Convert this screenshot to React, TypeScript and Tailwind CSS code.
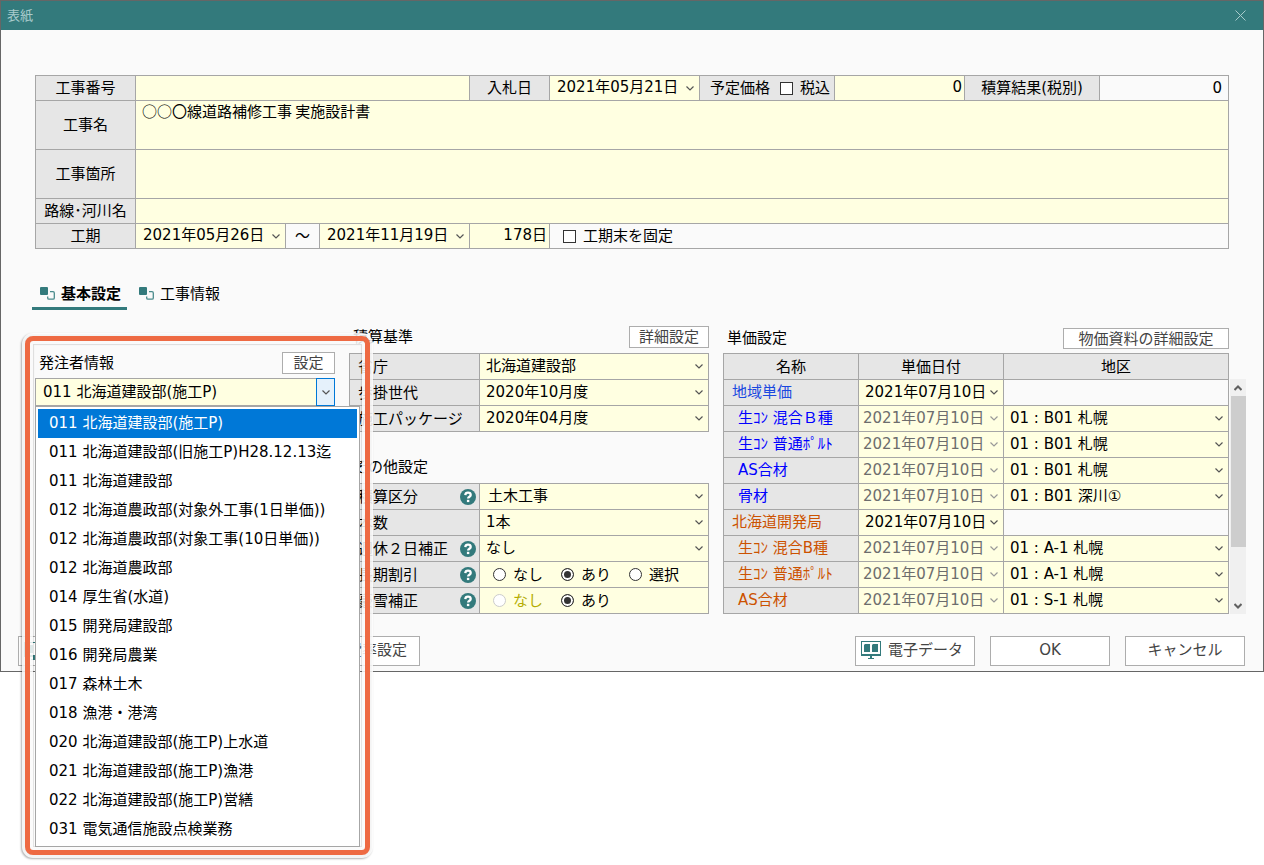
import { useState } from "react";
import type { ReactNode } from "react";

type Option = {
  code: string;
  name: string;
};

type PriceRow = {
  name: string;
  group: "region" | "bureau";
  parent?: boolean;
  area?: string;
};

const clients: Option[] = [
  { code: "011", name: "北海道建設部(施工P)" },
  { code: "011", name: "北海道建設部(旧施工P)H28.12.13迄" },
  { code: "011", name: "北海道建設部" },
  { code: "012", name: "北海道農政部(対象外工事(1日単価))" },
  { code: "012", name: "北海道農政部(対象工事(10日単価))" },
  { code: "012", name: "北海道農政部" },
  { code: "014", name: "厚生省(水道)" },
  { code: "015", name: "開発局建設部" },
  { code: "016", name: "開発局農業" },
  { code: "017", name: "森林土木" },
  { code: "018", name: "漁港・港湾" },
  { code: "020", name: "北海道建設部(施工P)上水道" },
  { code: "021", name: "北海道建設部(施工P)漁港" },
  { code: "022", name: "北海道建設部(施工P)営繕" },
  { code: "031", name: "電気通信施設点検業務" },
];

const prices: PriceRow[] = [
  { name: "地域単価", group: "region", parent: true },
  { name: "生ｺﾝ 混合Ｂ種", group: "region", area: "01 : B01 札幌" },
  { name: "生ｺﾝ 普通ﾎﾟﾙﾄ", group: "region", area: "01 : B01 札幌" },
  { name: "AS合材", group: "region", area: "01 : B01 札幌" },
  { name: "骨材", group: "region", area: "01 : B01 深川①" },
  { name: "北海道開発局", group: "bureau", parent: true },
  { name: "生ｺﾝ 混合B種", group: "bureau", area: "01 : A-1 札幌" },
  { name: "生ｺﾝ 普通ﾎﾟﾙﾄ", group: "bureau", area: "01 : A-1 札幌" },
  { name: "AS合材", group: "bureau", area: "01 : S-1 札幌" },
];

function Chevron({ className = "" }: { className?: string }) {
  return (
    <svg
      viewBox="0 0 8 5"
      className={`pointer-events-none h-[5px] w-2 fill-none stroke-current ${className}`}
      aria-hidden="true"
    >
      <path d="M0.5 0.5 L4 4 L7.5 0.5" strokeWidth="1.2" />
    </svg>
  );
}

function Select({
  label,
  value,
  pad = "pl-1.5",
  disabled = false,
}: {
  label: string;
  value: string;
  pad?: string;
  disabled?: boolean;
}) {
  return (
    <div className="relative flex h-full w-full items-center bg-[#ffffe1]">
      <select
        aria-label={label}
        disabled={disabled}
        className={`h-full w-full appearance-none bg-transparent pb-0.5 text-black outline-none disabled:text-[#6d6d6d] disabled:opacity-100 ${pad}`}
      >
        <option>{value}</option>
      </select>
      <Chevron
        className={`absolute right-[5px] ${disabled ? "text-[#999]" : "text-[#555]"}`}
      />
    </div>
  );
}

function Button({
  children,
  label,
  className = "",
}: {
  children: ReactNode;
  label?: string;
  className?: string;
}) {
  return (
    <button
      type="button"
      aria-label={label}
      className={`flex items-center border border-[#adadad] bg-white text-[#444] ${className}`}
    >
      {children}
    </button>
  );
}

function CheckBox({ id, children }: { id: string; children: ReactNode }) {
  return (
    <label htmlFor={id} className="flex items-center gap-[7px]">
      <input
        id={id}
        type="checkbox"
        className="size-[13px] appearance-none border border-[#333] bg-white checked:bg-[#333]"
      />
      {children}
    </label>
  );
}

function RadioGroup({
  name,
  items,
  initial,
  disabledItem,
}: {
  name: string;
  items: string[];
  initial: string;
  disabledItem?: string;
}) {
  const [value, setValue] = useState(initial);

  return (
    <div
      role="radiogroup"
      aria-label={name}
      className="flex h-full flex-1 items-center gap-[18px] bg-[#ffffe1] pl-[13px]"
    >
      {items.map((item) => {
        const off = item === disabledItem;
        return (
          <label
            key={item}
            className={`flex items-center gap-[7px] ${off ? "text-[#b5ad00]" : ""}`}
          >
            <input
              type="radio"
              name={name}
              checked={value === item}
              disabled={off}
              onChange={() => setValue(item)}
              className="size-[13px] appearance-none rounded-full border border-[#333] bg-white checked:bg-[#333] checked:shadow-[inset_0_0_0_2px_white] disabled:border-[#ccc]"
            />
            {item}
          </label>
        );
      })}
    </div>
  );
}

function HelpIcon() {
  return (
    <button type="button" aria-label="ヘルプ" className="size-4">
      <svg viewBox="0 0 16 16" className="size-4" aria-hidden="true">
        <circle cx="8" cy="8" r="8" fill="#337a7c" />
        <path
          d="M5.3 6.1 C5.4 4.5 6.4 3.7 8 3.7 C9.7 3.7 10.7 4.6 10.7 5.9 C10.7 7.7 8.1 7.7 8.1 9.6"
          fill="none"
          stroke="#fff"
          strokeWidth="2.3"
        />
        <rect x="6.9" y="10.8" width="2.4" height="2.3" fill="#fff" />
      </svg>
    </button>
  );
}

function MonitorIcon() {
  return (
    <svg viewBox="0 0 20 18" className="h-[18px] w-5 shrink-0" aria-hidden="true">
      <path
        fill="#337a7c"
        fillRule="evenodd"
        d="M0 0h20v15h-9v2h2v1H7v-1h2v-2H0zM1 1v12h18V1z"
      />
      <path fill="#337a7c" d="M3 4l1-1h5v8H3zM11 4l1-1h5v8h-6z" />
    </svg>
  );
}

function TabIcon() {
  return (
    <svg viewBox="0 0 15 13" className="h-[13px] w-[15px]" aria-hidden="true">
      <rect width="8" height="8" rx="1" fill="#337a7c" />
      <path
        d="M10 4.6h3a1.3 1.3 0 0 1 1.3 1.3v5a1.3 1.3 0 0 1-1.3 1.3H9a1.3 1.3 0 0 1-1.3-1.3v-1.4"
        fill="none"
        stroke="#4a8b8c"
        strokeWidth="1.3"
      />
    </svg>
  );
}

function FormLabel({ children, className }: { children: ReactNode; className: string }) {
  return (
    <div className={`flex shrink-0 items-center justify-center bg-[#e6e6e6] ${className}`}>
      {children}
    </div>
  );
}

function SettingRow({
  label,
  help = false,
  children,
}: {
  label: string;
  help?: boolean;
  children: ReactNode;
}) {
  return (
    <div className="flex h-[25px] gap-px">
      <div className="flex w-[129px] shrink-0 items-center justify-between bg-[#e6e6e6] pr-[3px] pl-2 whitespace-nowrap">
        {label}
        {help && <HelpIcon />}
      </div>
      {children}
    </div>
  );
}

function ProjectForm() {
  return (
    <div className="mx-[34px] flex flex-col gap-px border border-[#a6a6a6] bg-[#a6a6a6]">
      <div className="flex h-6 gap-px">
        <FormLabel className="w-[99px]">
          <label htmlFor="project-no">工事番号</label>
        </FormLabel>
        <input id="project-no" className="min-w-0 flex-1 bg-[#ffffe1] px-1.5 outline-none" />
        <FormLabel className="w-[79px]">入札日</FormLabel>
        <div className="w-[149px]">
          <Select label="入札日" value="2021年05月21日" pad="pl-[7px]" />
        </div>
        <FormLabel className="w-[134px] gap-2.5 pl-1.5">
          <label htmlFor="planned-price">予定価格</label>
          <CheckBox id="tax-included">税込</CheckBox>
        </FormLabel>
        <input
          id="planned-price"
          defaultValue="0"
          className="w-[129px] bg-[#ffffe1] pr-0.5 pb-0.5 text-right outline-none"
        />
        <FormLabel className="w-[134px]">積算結果(税別)</FormLabel>
        <output className="w-32 bg-[#fafafa] pr-1.5 text-right leading-6">0</output>
      </div>
      <div className="flex h-12 gap-px">
        <FormLabel className="w-[99px]">
          <label htmlFor="project-name">工事名</label>
        </FormLabel>
        <textarea
          id="project-name"
          defaultValue="○○〇線道路補修工事 実施設計書"
          className="flex-1 resize-none bg-[#ffffe1] pl-1.5 font-['Noto_Sans_CJK_JP',sans-serif] leading-5 outline-none"
        />
      </div>
      <div className="flex h-12 gap-px">
        <FormLabel className="w-[99px]">
          <label htmlFor="project-place">工事箇所</label>
        </FormLabel>
        <textarea id="project-place" className="flex-1 resize-none bg-[#ffffe1] pl-1.5 outline-none" />
      </div>
      <div className="flex h-6 gap-px">
        <FormLabel className="w-[99px]">
          <label htmlFor="route-name">路線･河川名</label>
        </FormLabel>
        <input id="route-name" className="flex-1 bg-[#ffffe1] px-1.5 outline-none" />
      </div>
      <div className="flex h-6 gap-px">
        <FormLabel className="w-[99px]">工期</FormLabel>
        <div className="w-[149px]">
          <Select label="工期開始日" value="2021年05月26日" pad="pl-[7px]" />
        </div>
        <div className="flex w-[33px] items-center justify-center bg-[#fafafa]">～</div>
        <div className="w-[149px]">
          <Select label="工期終了日" value="2021年11月19日" pad="pl-[7px]" />
        </div>
        <input
          aria-label="日数"
          defaultValue="178日"
          className="w-[79px] bg-[#ffffe1] pr-0.5 pb-0.5 text-right outline-none"
        />
        <div className="flex flex-1 items-center bg-[#fafafa] pl-[13px]">
          <CheckBox id="fix-end">工期末を固定</CheckBox>
        </div>
      </div>
    </div>
  );
}

function Tabs() {
  const [active, setActive] = useState("基本設定");

  return (
    <div role="tablist" className="mt-[31px] flex gap-1 px-[31px]">
      {["基本設定", "工事情報"].map((tab) => (
        <button
          key={tab}
          type="button"
          role="tab"
          aria-selected={active === tab}
          onClick={() => setActive(tab)}
          className={`flex h-[30px] items-center gap-1.5 border-b-[3px] px-2 pr-1.5 ${
            active === tab ? "border-[#337a7c] font-bold" : "border-transparent"
          }`}
        >
          <TabIcon />
          {tab}
        </button>
      ))}
    </div>
  );
}

function ClientPanel() {
  const [selected, setSelected] = useState(0);

  return (
    <section className="relative w-[300px] shrink-0 pt-[26px]">
      <div className="flex h-[22px] items-center justify-between pl-1">
        <h2>発注者情報</h2>
        <Button className="h-[22px] w-[53px] justify-center">設定</Button>
      </div>
      <div className="relative mt-1 flex h-7 border border-[#a6a6a6] bg-[#ffffe1]">
        <select
          aria-label="発注者情報"
          value={selected}
          onChange={(e) => setSelected(Number(e.target.value))}
          className="w-full appearance-none bg-transparent pl-[7px] outline-none"
        >
          {clients.map((client, i) => (
            <option key={client.name} value={i}>
              {client.code} {client.name}
            </option>
          ))}
        </select>
        <div className="pointer-events-none absolute -inset-y-px -right-px flex w-[19px] items-center justify-center border border-[#0078d7] bg-[#e5f1fb] text-[#555]">
          <Chevron />
        </div>
      </div>

      <ul
        role="listbox"
        aria-label="発注者一覧"
        className="absolute top-full left-0 z-20 w-[325px] border border-[#a6a6a6] bg-white p-0.5"
      >
        {clients.map((client, i) => (
          <li
            key={client.name}
            role="option"
            aria-selected={i === selected}
            onClick={() => setSelected(i)}
            className={`h-[29px] pl-[11px] leading-[28px] whitespace-nowrap ${
              i === selected ? "bg-[#0078d7] text-white" : ""
            }`}
          >
            {client.code} {client.name}
          </li>
        ))}
      </ul>

      {/* highlight frame around the client picker */}
      <div className="pointer-events-none absolute top-2.5 -left-2.5 z-10 h-[519px] w-[345px] rounded-lg border-5 border-[#ee6a43] shadow-[0_0_0_3px_rgba(255,255,255,0.85),-1px_1px_2px_3px_rgba(0,0,0,0.3),inset_0_0_0_3px_rgba(255,255,255,0.85),inset_0_0_1px_4px_rgba(0,0,0,0.12)]" />
    </section>
  );
}

function StandardsPanel() {
  return (
    <section className="w-[360px] shrink-0">
      <div className="flex h-[27px] items-end justify-between pb-[5px] pl-1">
        <h2 className="leading-[22px]">積算基準</h2>
        <Button className="h-[22px] w-20 justify-center">詳細設定</Button>
      </div>
      <div className="flex flex-col gap-px border border-[#a6a6a6] bg-[#a6a6a6]">
        <SettingRow label="省庁">
          <Select label="省庁" value="北海道建設部" />
        </SettingRow>
        <SettingRow label="歩掛世代">
          <Select label="歩掛世代" value="2020年10月度" />
        </SettingRow>
        <SettingRow label="施工パッケージ">
          <Select label="施工パッケージ" value="2020年04月度" />
        </SettingRow>
      </div>

      <h2 className="mt-6 mb-1 pl-1 leading-[23px]">その他設定</h2>
      <div className="flex flex-col gap-px border border-[#a6a6a6] bg-[#a6a6a6]">
        <SettingRow label="積算区分" help>
          <Select label="積算区分" value="土木工事" pad="pl-2" />
        </SettingRow>
        <SettingRow label="本数">
          <Select label="本数" value="1本" />
        </SettingRow>
        <SettingRow label="週休２日補正" help>
          <Select label="週休２日補正" value="なし" />
        </SettingRow>
        <SettingRow label="長期割引" help>
          <RadioGroup name="長期割引" items={["なし", "あり", "選択"]} initial="あり" />
        </SettingRow>
        <SettingRow label="豪雪補正" help>
          <RadioGroup
            name="豪雪補正"
            items={["なし", "あり"]}
            initial="あり"
            disabledItem="なし"
          />
        </SettingRow>
      </div>
    </section>
  );
}

function ScrollBar() {
  return (
    <div className="mt-[26px] flex w-4 shrink-0 flex-col items-center bg-[#f0f0f0] text-[#606060]">
      <button type="button" aria-label="上へ" className="flex h-[17px] w-4 items-center justify-center">
        <svg viewBox="0 0 8 6" className="h-1.5 w-2 fill-none stroke-current stroke-2" aria-hidden="true">
          <path d="M0.5 5 L4 1.5 L7.5 5" />
        </svg>
      </button>
      <div className="h-[151px] w-[15px] bg-[#cdcdcd]" />
      <button type="button" aria-label="下へ" className="mt-auto flex h-[17px] w-4 items-center justify-center">
        <svg viewBox="0 0 8 6" className="h-1.5 w-2 fill-none stroke-current stroke-2" aria-hidden="true">
          <path d="M0.5 1 L4 4.5 L7.5 1" />
        </svg>
      </button>
    </div>
  );
}

function PricePanel() {
  return (
    <section className="min-w-0 flex-1">
      <div className="mr-[17px] flex h-[27px] items-end justify-between pb-1 pl-1">
        <h2 className="leading-[22px]">単価設定</h2>
        <Button className="h-[21px] w-[166px] justify-center">物価資料の詳細設定</Button>
      </div>
      <div className="flex gap-px">
        <table className="flex-1 table-fixed border-collapse">
          <thead>
            <tr className="h-[26px] bg-[#e6e6e6]">
              <th className="w-[135px] border border-[#a6a6a6] p-0 font-normal">名称</th>
              <th className="w-[145px] border border-[#a6a6a6] p-0 font-normal">単価日付</th>
              <th className="border border-[#a6a6a6] p-0 font-normal">地区</th>
            </tr>
          </thead>
          <tbody>
            {prices.map((row) => {
              const color = row.group === "bureau" ? "text-[#cc5200]" : "text-[#0000ff]";
              return (
                <tr key={row.group + row.name} className="h-[26px]">
                  <th
                    className={`border border-[#a6a6a6] bg-[#e6e6e6] p-0 pb-0.5 text-left font-normal whitespace-nowrap ${
                      row.parent ? "pl-2" : "pl-3.5"
                    } ${row.parent && row.group === "region" ? "text-[#1a48e0]" : color}`}
                  >
                    {row.name}
                  </th>
                  <td className="h-[26px] border border-[#a6a6a6] p-0">
                    <Select
                      label={`${row.name} 単価日付`}
                      value="2021年07月10日"
                      pad={row.parent ? "pl-1.5" : "pl-1"}
                      disabled={!row.parent}
                    />
                  </td>
                  <td className="h-[26px] border border-[#a6a6a6] p-0">
                    {row.area && <Select label={`${row.name} 地区`} value={row.area} />}
                  </td>
                </tr>
              );
            })}
          </tbody>
        </table>
        <ScrollBar />
      </div>
    </section>
  );
}

function Footer() {
  return (
    <div className="mt-[22px] flex justify-between pr-[18px] pb-[5px] pl-[17px]">
      <div className="flex gap-[162px]">
        <Button label="印刷" className="h-[30px] w-[120px] pl-[5px]">
          <MonitorIcon />
        </Button>
        <Button className="h-[30px] w-[120px] justify-end pr-3 pb-0.5">経費率設定</Button>
      </div>
      <div className="flex gap-[15px]">
        <Button className="h-[30px] w-[120px] gap-[7px] pb-0.5 pl-[5px]">
          <MonitorIcon />
          電子データ
        </Button>
        <Button className="h-[30px] w-[120px] justify-center pb-0.5">OK</Button>
        <Button className="h-[30px] w-[120px] justify-center pb-0.5">キャンセル</Button>
      </div>
    </div>
  );
}

export default function App() {
  return (
    <div className="min-h-screen bg-white font-['DejaVu_Sans','Noto_Sans_CJK_JP',sans-serif] text-[15px] leading-5 text-black">
      <div className="border border-[#666] bg-[#fafafa]">
        <header className="flex h-[29px] items-center justify-between bg-[#337a7c] pr-[17px] pl-1.5 text-[#a9cbcc]">
          <h1 className="text-[13px]">表紙</h1>
          <button type="button" aria-label="閉じる">
            <svg viewBox="0 0 11 11" className="size-[11px] stroke-current" aria-hidden="true">
              <path d="M0.5 0.5 L10.5 10.5 M10.5 0.5 L0.5 10.5" />
            </svg>
          </button>
        </header>

        <main className="pt-[45px]">
          <ProjectForm />
          <Tabs />
          <div className="mt-4 flex items-stretch gap-3.5 pr-[17px] pl-[34px]">
            <div className="flex items-start">
              <ClientPanel />
            </div>
            <StandardsPanel />
            <PricePanel />
          </div>
          <Footer />
        </main>
      </div>
    </div>
  );
}
